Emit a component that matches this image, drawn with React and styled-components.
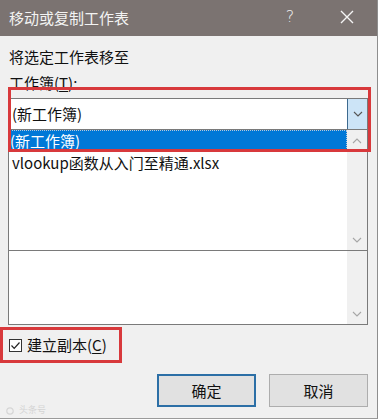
import React from "react";
import styled, { createGlobalStyle } from "styled-components";

const Global = createGlobalStyle`
  html, body { margin: 0; padding: 0; background: #f0f0f0; }
  body { font-family: "Noto Sans CJK SC", "Noto Sans", sans-serif; }
`;

const FONT = `"Noto Sans CJK SC", "Noto Sans", sans-serif`;

const Dialog = styled.div`
  position: relative;
  width: 378px;
  height: 419px;
  box-sizing: border-box;
  background: #f0f0f0;
  border-right: 1px solid #8e8e8e;
  border-bottom: 1px solid #9a9a9a;
  display: flex;
  flex-direction: column;
  overflow: hidden;
  font-family: ${FONT};
  color: #111;
`;

const TitleBar = styled.div`
  height: 36px;
  flex: none;
  background: #7b7371;
  display: flex;
  align-items: center;
  padding-left: 9px;
`;

const Title = styled.div`
  flex: 1;
  font-size: 15px;
  line-height: 20px;
  color: #f3f3f3;
  margin-top: -1px;
`;

const Help = styled.div`
  width: 20px;
  font-size: 16px;
  line-height: 20px;
  color: #eeeeee;
  font-family: "DejaVu Sans", sans-serif;
  font-weight: 300;
  text-align: center;
  margin-right: 40px;
  margin-top: -2px;
`;

const CloseBox = styled.div`
  width: 14px;
  height: 14px;
  margin-right: 23px;
  margin-top: -2px;
  display: flex;
`;

const Content = styled.div`
  flex: 1;
  display: flex;
  flex-direction: column;
  padding: 11px 9px 0 8px;
`;

const Label = styled.div`
  font-size: 15px;
  line-height: 20px;
  padding-left: 1px;
  margin-top: ${(p) => p.$gap || 0}px;
`;

const Combo = styled.div`
  margin-top: 5px;
  height: 32px;
  box-sizing: border-box;
  border: 1px solid #7a7a7a;
  background: #fff;
  display: flex;
  align-items: stretch;
`;

const ComboText = styled.div`
  flex: 1;
  font-size: 15px;
  line-height: 30px;
  padding-left: 3px;
`;

const ComboButton = styled.div`
  width: 19px;
  background: #cce4f7;
  border-left: 1px solid #3d6a8f;
  display: flex;
  align-items: center;
  justify-content: center;
`;

const ListBox = styled.div`
  height: ${(p) => p.$h}px;
  box-sizing: border-box;
  border: 1px solid #7a7a7a;
  border-top: none;
  background: #fff;
  display: flex;
`;

const Rows = styled.div`
  flex: 1;
  display: flex;
  flex-direction: column;
`;

const Row = styled.div`
  height: 22px;
  font-size: 15px;
  line-height: 22px;
  padding-left: ${(p) => (p.$selected ? 1 : 3)}px;
  background: ${(p) => (p.$selected ? "#0078d7" : "transparent")};
  color: ${(p) => (p.$selected ? "#fff" : "#111")};
  outline: ${(p) => (p.$selected ? "1px dotted #b8c8d8" : "none")};
  outline-offset: -1px;
`;

const ScrollTrack = styled.div`
  width: 20px;
  background: #f0f0f0;
  display: flex;
  flex-direction: column;
  justify-content: ${(p) => (p.$onlyDown ? "flex-end" : "space-between")};
`;

const ScrollArrow = styled.div`
  height: 21px;
  display: flex;
  align-items: center;
  justify-content: center;
`;

const CheckRow = styled.label`
  margin-top: 10px;
  height: 20px;
  display: flex;
  align-items: center;
  gap: 5px;
  padding-left: 1px;
  font-size: 15px;
  line-height: 20px;
`;

const CheckBox = styled.span`
  width: 13px;
  height: 13px;
  box-sizing: border-box;
  border: 1px solid #333;
  background: #fff;
  display: flex;
  align-items: center;
  justify-content: center;
`;

const ButtonRow = styled.div`
  margin-top: 19px;
  display: flex;
  justify-content: flex-end;
  gap: 13px;
`;

const Button = styled.div`
  width: 99px;
  height: 33px;
  box-sizing: border-box;
  background: #e1e1e1;
  border: ${(p) => (p.$primary ? "2px solid #2c6fa6" : "1px solid #adadad")};
  display: flex;
  align-items: center;
  justify-content: center;
  font-size: 15px;
  color: #111;
`;

const Watermark = styled.div`
  position: absolute;
  left: 6px;
  bottom: 3px;
  font-size: 9px;
  line-height: 10px;
  color: #d4d4d4;
  display: flex;
  align-items: center;
  gap: 3px;
`;

const Annotation = styled.div`
  position: absolute;
  left: ${(p) => p.$x}px;
  top: ${(p) => p.$y}px;
  width: ${(p) => p.$w}px;
  height: ${(p) => p.$h}px;
  box-sizing: border-box;
  border: 3px solid #d8393c;
  pointer-events: none;
`;

const U = styled.span`
  text-decoration: underline;
  text-underline-offset: 2px;
`;

const Chevron = ({ up, color = "#a6a6a6" }) => (
  <svg width="10" height="6" viewBox="0 0 10 6">
    <polyline
      points={up ? "1,5 5,1 9,5" : "1,1 5,5 9,1"}
      fill="none"
      stroke={color}
      strokeWidth="1.1"
    />
  </svg>
);

export default function App() {
  return (
    <>
      <Global />
      <Dialog>
        <TitleBar>
          <Title>移动或复制工作表</Title>
          <Help>?</Help>
          <CloseBox>
            <svg width="14" height="14" viewBox="0 0 14 14">
              <path d="M1 1 L13 13 M13 1 L1 13" stroke="#f5f5f5" strokeWidth="1.4" />
            </svg>
          </CloseBox>
        </TitleBar>
        <Content>
          <Label>将选定工作表移至</Label>
          <Label $gap={6}>
            工作簿(<U>T</U>):
          </Label>
          <Combo>
            <ComboText>(新工作簿)</ComboText>
            <ComboButton>
              <Chevron color="#555" />
            </ComboButton>
          </Combo>
          <ListBox $h={121}>
            <Rows>
              <Row $selected>(新工作簿)</Row>
              <Row>vlookup函数从入门至精通.xlsx</Row>
            </Rows>
            <ScrollTrack>
              <ScrollArrow>
                <Chevron up />
              </ScrollArrow>
              <ScrollArrow>
                <Chevron />
              </ScrollArrow>
            </ScrollTrack>
          </ListBox>
          <ListBox $h={74}>
            <Rows />
            <ScrollTrack $onlyDown>
              <ScrollArrow>
                <Chevron />
              </ScrollArrow>
            </ScrollTrack>
          </ListBox>
          <CheckRow>
            <CheckBox>
              <svg width="11" height="11" viewBox="0 0 11 11">
                <polyline points="1.5,5.5 4.2,8.3 9.5,2.5" fill="none" stroke="#222" strokeWidth="1.2" />
              </svg>
            </CheckBox>
            <span>
              建立副本(<U>C</U>)
            </span>
          </CheckRow>
          <ButtonRow>
            <Button $primary>确定</Button>
            <Button>取消</Button>
          </ButtonRow>
        </Content>
        <Watermark>
          <svg width="10" height="9" viewBox="0 0 10 9">
            <circle cx="4" cy="5" r="3.2" fill="none" stroke="#d6d6d6" strokeWidth="1.2" />
          </svg>
          头条号
        </Watermark>
        <Annotation $x={8} $y={87} $w={363} $h={65} />
        <Annotation $x={0} $y={327} $w={122} $h={36} />
      </Dialog>
    </>
  );
}
